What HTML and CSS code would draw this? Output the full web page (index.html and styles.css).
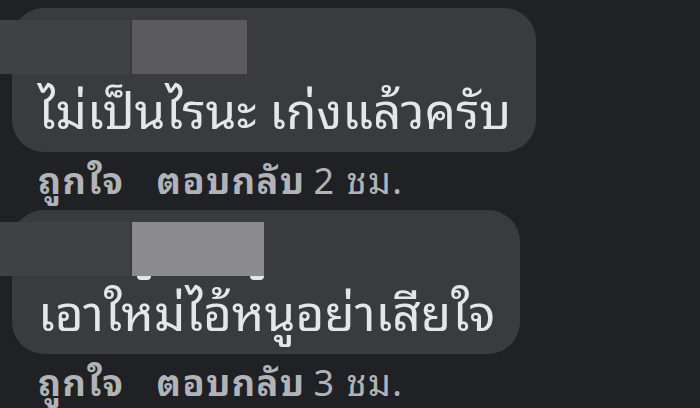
FILE: index.html
```html
<!DOCTYPE html>
<html lang="th">
<head>
    <meta charset="UTF-8">
    <meta name="viewport" content="width=device-width, initial-scale=1.0">
    <title>Comments</title>
    <link rel="stylesheet" href="styles.css">
</head>
<body>
    <div class="comments">
        <div class="comment">
            <div class="bubble">
                <div class="name">
                    <span class="blur blur-dark"></span>
                    <span class="blur blur-mid"></span>
                </div>
                <div class="text">ไม่เป็นไรนะ เก่งแล้วครับ</div>
            </div>
            <div class="actions">
                <span class="like">ถูกใจ</span>
                <span class="reply">ตอบกลับ</span>
                <span class="time">2 ชม.</span>
            </div>
        </div>

        <div class="comment">
            <div class="bubble">
                <div class="name">
                    <span class="blur blur-dark"></span>
                    <span class="blur blur-light"></span>
                </div>
                <div class="peek">
                    <span class="dot dot-left"></span>
                    <span class="dot dot-right"></span>
                </div>
                <div class="text">เอาใหม่ไอ้หนูอย่าเสียใจ</div>
            </div>
            <div class="actions">
                <span class="like">ถูกใจ</span>
                <span class="reply">ตอบกลับ</span>
                <span class="time">3 ชม.</span>
            </div>
        </div>
    </div>
</body>
</html>
```

FILE: styles.css
```css
body {
    margin: 0;
    padding: 0;
    background-color: #202124;
    font-family: "Noto Sans Thai Looped", "Noto Sans Thai", Tahoma, sans-serif;
    height: 408px;
    overflow: hidden;
}
.comments {
    padding-top: 8px;
    padding-left: 12px;
}
.bubble {
    display: inline-block;
    background-color: #3a3b3c;
    border-radius: 32px;
    padding: 12px 25px 12px 26px;
}
.name {
    display: flex;
    height: 54px;
    margin-left: -38px;
}
.blur {
    display: block;
    height: 100%;
}
.blur-dark {
    width: 130px;
    margin-right: 2px;
    background-color: #404143;
}
.blur-mid {
    width: 115px;
    background-color: #5b5b5d;
}
.blur-light {
    width: 132px;
    background-color: #8b8b8e;
}
.peek {
    display: flex;
    height: 4px;
    margin-bottom: -4px;
    margin-left: 99px;
}
.dot {
    display: block;
    width: 14px;
    height: 4px;
    border-radius: 0 0 7px 7px;
    background-color: #e4e6eb;
}
.dot-right {
    margin-left: 99px;
}
.text {
    color: #e4e6eb;
    font-size: 49.5px;
    line-height: 66px;
    white-space: nowrap;
}
.actions {
    display: flex;
    height: 58px;
    line-height: 52px;
    color: #b0b3b8;
    font-size: 36px;
    font-weight: bold;
    letter-spacing: 1.5px;
}
.actions .like {
    margin-left: 26px;
}
.actions .reply {
    margin-left: 32px;
}
.actions .time {
    font-weight: normal;
    margin-left: 8px;
}
```
